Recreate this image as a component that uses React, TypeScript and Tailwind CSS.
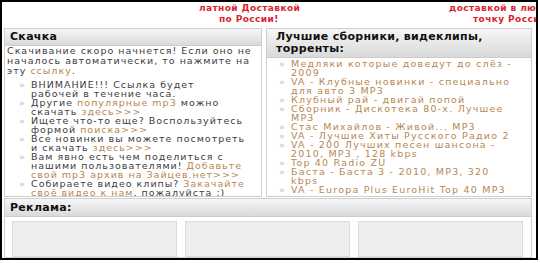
const font = { fontFamily: '"DejaVu Sans", Verdana, sans-serif' };

function Link({ children }: { children: React.ReactNode }) {
  return <span className="text-[#b88752]">{children}</span>;
}

function Item({ children }: { children: React.ReactNode }) {
  return (
    <li className="flex">
      <span className="w-[12px] shrink-0 text-[#c0c0c0]">»</span>
      <span className="whitespace-nowrap">{children}</span>
    </li>
  );
}

const hits: React.ReactNode[] = [
  <>Медляки которые доведут до слёз -<br />2009</>,
  <>VA - Клубные новинки - специально<br />для авто 3 MP3</>,
  <>Клубный рай - двигай попой</>,
  <>Сборник - Дискотека 80-х. Лучшее<br />MP3</>,
  <>Стас Михайлов - Живой... MP3</>,
  <>VA - Лучшие Хиты Русского Радио 2</>,
  <>VA - 200 Лучших песен шансона -<br />2010, MP3 , 128 kbps</>,
  <>Top 40 Radio ZU</>,
  <>Баста - Баста 3 - 2010, MP3, 320<br />kbps</>,
  <>VA - Europa Plus EuroHit Top 40 MP3</>,
];

export default function App() {
  return (
    <div className="w-[540px] h-[263px] bg-white overflow-hidden" style={font}>
      <div className="w-[538px] h-[260px] border-2 border-black flex flex-col overflow-hidden">
        {/* clipped banner text */}
        <div className="h-[26px] shrink-0 flex pt-[1px] text-[9px] leading-[11px] font-bold tracking-[0.4px] text-[#d8242c] whitespace-nowrap overflow-hidden">
          <div className="w-[197px] shrink-0" />
          <div className="w-[250px] shrink-0">
            <div>латной Доставкой</div>
            <div className="pl-[20px]">по России!</div>
          </div>
          <div className="shrink-0">
            <div>доставкой в любую</div>
            <div className="pl-[24px]">точку России!</div>
          </div>
        </div>

        <div className="h-[169px] shrink-0 flex gap-[4px] pl-[2px] pr-[4px] text-[9.5px] tracking-[1px] text-[#3d3d3d]">
          {/* left panel */}
          <div className="w-[258px] shrink-0 border border-[#cfcfcf] flex flex-col overflow-hidden">
            <div className="h-[17px] shrink-0 bg-gradient-to-b from-[#f6f6f6] to-[#dadada] border-b border-[#cccccc] pl-[5px] text-[11px] leading-[16px] font-bold tracking-[0.3px] text-[#111]">
              Скачка
            </div>
            <div className="pl-[2px] whitespace-nowrap">
              <p className="leading-[10px]">
                Скачивание скоро начнется! Если оно не<br />
                началось автоматически, то нажмите на<br />
                эту <Link>ссылку</Link>.
              </p>
              <ul className="mt-[4px] pl-[12px] leading-[9px]">
                <Item>ВНИМАНИЕ!!! Ссылка будет<br />рабочей в течение часа.</Item>
                <Item>Другие <Link>популярные mp3</Link> можно<br />скачать <Link>здесь&gt;&gt;&gt;</Link></Item>
                <Item>Ищете что-то еще? Воспользуйтесь<br />формой <Link>поиска&gt;&gt;&gt;</Link></Item>
                <Item>Все новинки вы можете посмотреть<br />и скачать <Link>здесь&gt;&gt;&gt;</Link></Item>
                <Item>
                  Вам явно есть чем поделиться с<br />нашими пользователями! <Link>Добавьте</Link>
                  <br />
                  <Link>свой mp3 архив на Зайцев.нет&gt;&gt;&gt;</Link>
                </Item>
                <Item>Собираете видео клипы? <Link>Закачайте</Link><br /><Link>своё видео к нам</Link>, пожалуйста ;)</Item>
              </ul>
            </div>
          </div>

          {/* right panel */}
          <div className="flex-1 border border-[#cfcfcf] flex flex-col overflow-hidden">
            <div className="h-[29px] shrink-0 bg-gradient-to-b from-[#f6f6f6] to-[#dadada] border-b border-[#cccccc] pl-[9px] pt-[2px] text-[11px] leading-[12px] font-bold tracking-[0.3px] text-[#111]">
              Лучшие сборники, видеклипы,<br />торренты:
            </div>
            <ul className="pl-[12px] pt-[1px] leading-[9px] tracking-[1.2px] text-[#b88752]">
              {hits.map((h, i) => (
                <Item key={i}>{h}</Item>
              ))}
            </ul>
          </div>
        </div>

        {/* ads */}
        <div className="flex-1 mt-[1px] ml-[2px] mr-[4px] border border-[#cfcfcf] flex flex-col overflow-hidden">
          <div className="h-[18px] shrink-0 bg-gradient-to-b from-[#f6f6f6] to-[#dadada] border-b border-[#cccccc] pl-[5px] text-[11px] leading-[17px] font-bold tracking-[0.3px] text-[#111]">
            Реклама:
          </div>
          <div className="flex-1 flex gap-[8px] pl-[7px] pr-[8px] pt-[4px]">
            <div className="flex-1 bg-[#eeeeee] border border-[#dcdcdc]" />
            <div className="flex-1 bg-[#eeeeee] border border-[#dcdcdc]" />
            <div className="flex-1 bg-[#eeeeee] border border-[#dcdcdc]" />
          </div>
        </div>
      </div>
    </div>
  );
}
